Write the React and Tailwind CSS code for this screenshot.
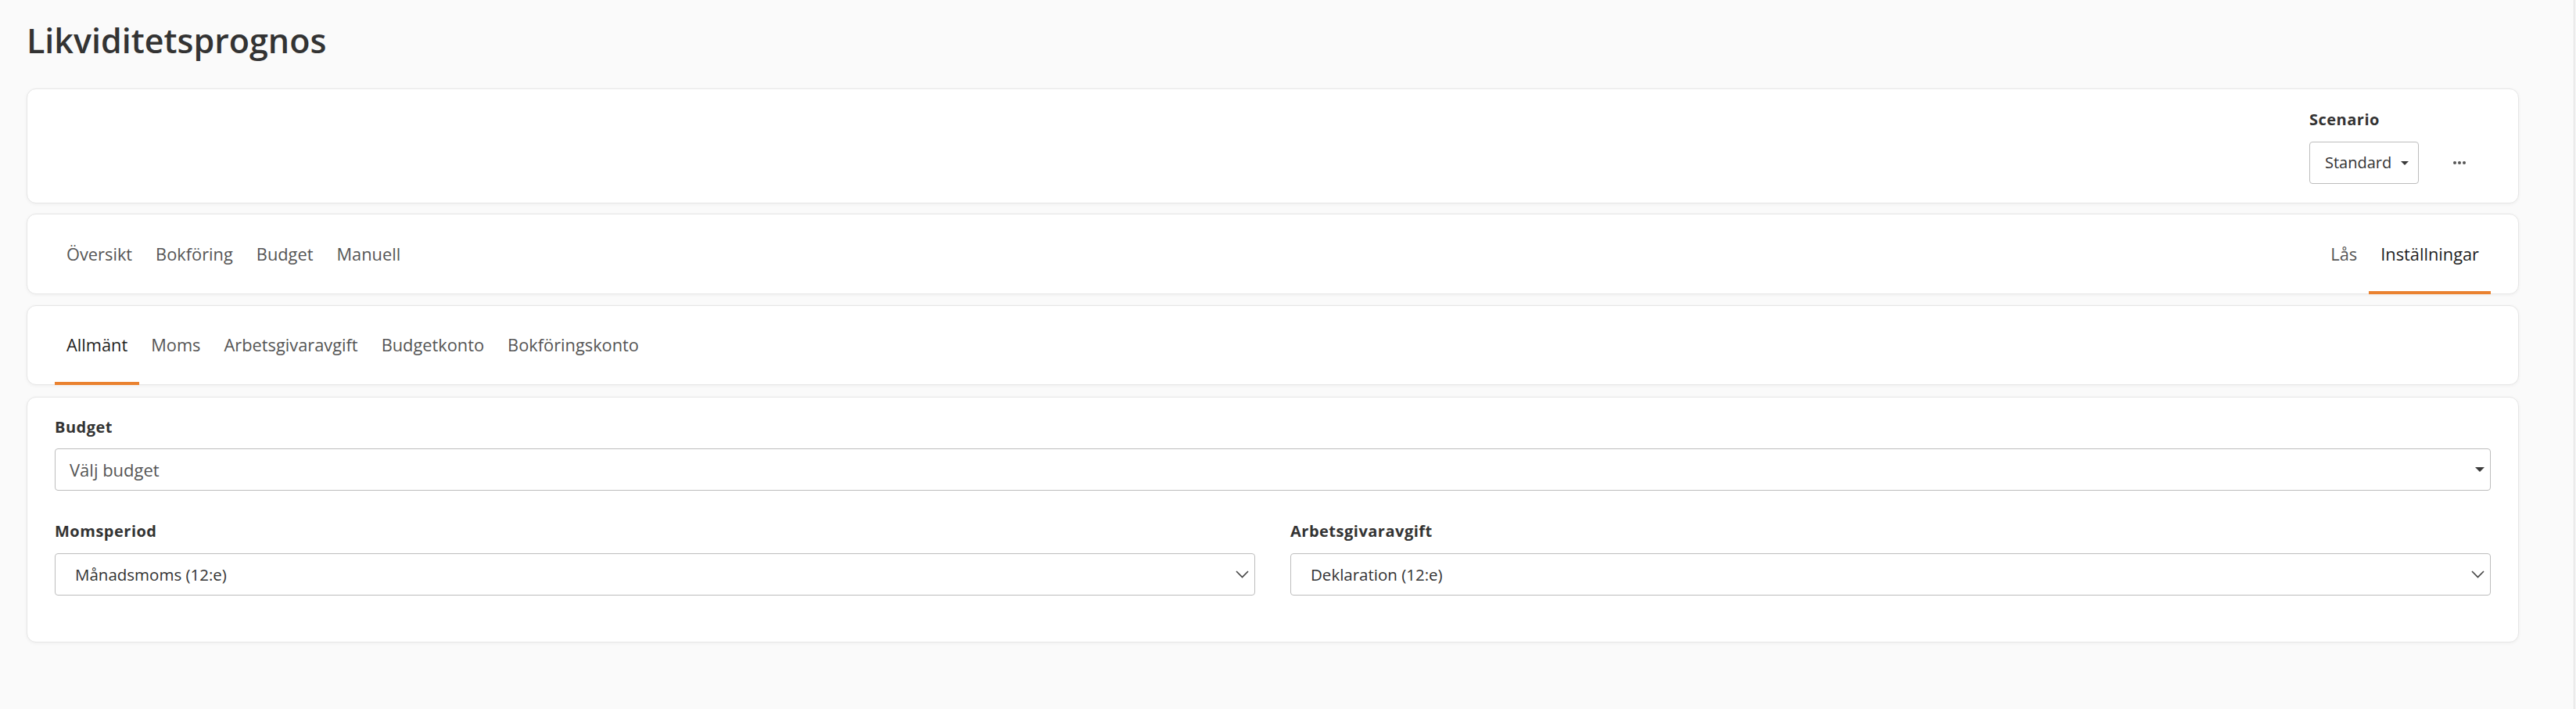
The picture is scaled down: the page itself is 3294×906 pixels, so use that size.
import { useState } from 'react';

const mainTabs = ['Översikt', 'Bokföring', 'Budget', 'Manuell'];
const rightTabs = ['Lås', 'Inställningar'];
const settingsTabs = ['Allmänt', 'Moms', 'Arbetsgivaravgift', 'Budgetkonto', 'Bokföringskonto'];

const Card = ({ className = '', children }) => (
  <div
    className={`bg-white rounded-[12px] border border-[#e6e6e6] shadow-[0_1px_4px_rgba(0,0,0,0.05)] ${className}`}
  >
    {children}
  </div>
);

const Tab = ({ label, active, onClick }) => (
  <button
    onClick={onClick}
    className={`relative h-full flex items-center px-[15px] text-[21.8px] leading-[28px] ${
      active ? 'text-[#1f1f1f]' : 'text-[#555555]'
    }`}
  >
    {label}
    {active && <span className="absolute left-0 right-0 bottom-[-1px] h-[4px] bg-[#ea8230]" />}
  </button>
);

const Caret = ({ className = '' }) => (
  <svg width="12" height="6" viewBox="0 0 12 6" className={className}>
    <path d="M0 0 L12 0 L6 6 Z" fill="#3a3a3a" />
  </svg>
);

const Chevron = () => (
  <svg width="17" height="10" viewBox="0 0 17 10">
    <path d="M1 1 L8.5 8.5 L16 1" fill="none" stroke="#444" strokeWidth="1.6" />
  </svg>
);

const NativeSelect = ({ value }) => (
  <div className="h-[54px] w-full flex items-center justify-between border border-[#bdbdbd] rounded-[4px] bg-white pl-[25px] pr-[7px]">
    <span className="text-[20.5px] text-[#333333]">{value}</span>
    <Chevron />
  </div>
);

const Label = ({ children, className = '' }) => (
  <div className={`text-[20px] leading-[24px] font-bold tracking-[0.025em] text-[#333333] ${className}`}>{children}</div>
);

export default function App() {
  const [mainTab, setMainTab] = useState('Inställningar');
  const [settingsTab, setSettingsTab] = useState('Allmänt');

  return (
    <div className="min-h-screen flex bg-[#fafafa] font-['Open_Sans','Noto_Sans',sans-serif] text-[#333333]">
      <div className="flex-1 pl-[34px] pr-[70px] pt-[28px] pb-[40px]">
        <h1 className="text-[43px] leading-[48px] font-semibold text-[#333333] mb-[37px]">Likviditetsprognos</h1>

        <div className="flex flex-col">
          <Card className="h-[147px] flex justify-end items-end pb-[24px] pr-[35px]">
            <div className="flex flex-col">
              <Label className="mb-[16px]">Scenario</Label>
              <div className="w-[140px] h-[54px] flex items-center border border-[#bdbdbd] rounded-[4px] pl-[19px] gap-[12px]">
                <span className="text-[20px] text-[#333333]">Standard</span>
                <Caret className="w-[10px] h-[5px]" />
              </div>
            </div>
            <button className="ml-[32px] mr-[20px] w-[40px] h-[54px] flex items-center justify-center gap-[2px]">
              <span className="w-[4px] h-[4px] rounded-full bg-[#555555]" />
              <span className="w-[4px] h-[4px] rounded-full bg-[#555555]" />
              <span className="w-[4px] h-[4px] rounded-full bg-[#555555]" />
            </button>
          </Card>

          <Card className="mt-[13px] h-[103px] flex justify-between px-[35px]">
            <div className="flex h-full">
              {mainTabs.map((t) => (
                <Tab key={t} label={t} active={mainTab === t} onClick={() => setMainTab(t)} />
              ))}
            </div>
            <div className="flex h-full">
              {rightTabs.map((t) => (
                <Tab key={t} label={t} active={mainTab === t} onClick={() => setMainTab(t)} />
              ))}
            </div>
          </Card>

          <Card className="mt-[14px] h-[102px] flex px-[35px]">
            {settingsTabs.map((t) => (
              <Tab key={t} label={t} active={settingsTab === t} onClick={() => setSettingsTab(t)} />
            ))}
          </Card>

          <Card className="mt-[15px] h-[314px] pt-[26px] px-[35px]">
            <Label className="mb-[15px]">Budget</Label>
            <div className="h-[54px] w-full flex items-center justify-between border border-[#bdbdbd] rounded-[4px] pl-[18px] pr-[7px]">
              <span className="text-[22px] text-[#555555]">Välj budget</span>
              <Caret />
            </div>

            <div className="mt-[40px] grid grid-cols-2 gap-x-[45px]">
              <div>
                <Label className="mb-[16px]">Momsperiod</Label>
                <NativeSelect value="Månadsmoms (12:e)" />
              </div>
              <div>
                <Label className="mb-[16px]">Arbetsgivaravgift</Label>
                <NativeSelect value="Deklaration (12:e)" />
              </div>
            </div>
          </Card>
        </div>
      </div>
      <div className="w-[3px] border-l border-[#e0e0e0] bg-[#f4f4f4]" />
    </div>
  );
}
